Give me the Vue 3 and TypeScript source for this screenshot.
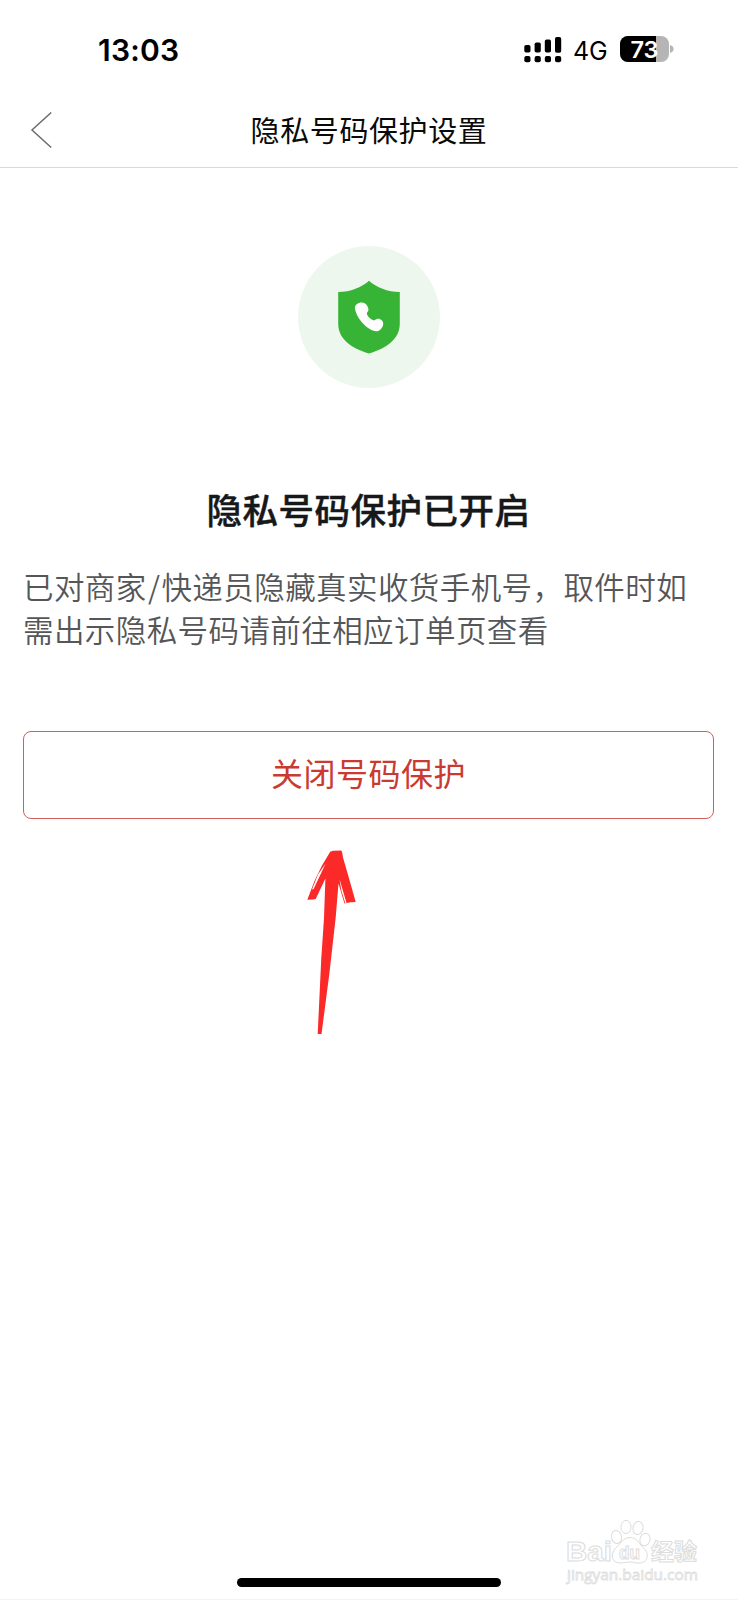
<script setup lang="ts">
interface SignalBar { x: number; y: number; h: number }

const bars: SignalBar[] = [
  { x: 0.3, y: 8, h: 7.6 },
  { x: 10.6, y: 5.5, h: 10 },
  { x: 20.8, y: 2.6, h: 13 },
  { x: 31, y: 0, h: 15.8 },
]
const batteryLevel = 73
const title = '隐私号码保护设置'
const heading = '隐私号码保护已开启'
const action = '关闭号码保护'
</script>

<template>
  <div class="screen">
    <header class="status">
      <span class="time">13:03</span>
      <div class="indicators">
        <svg class="signal" width="38" height="26" viewBox="0 0 38 26">
          <g v-for="bar in bars" :key="bar.x">
            <rect :x="bar.x" :y="bar.y" width="6.2" :height="bar.h" rx="1.8" />
            <rect :x="bar.x" y="19" width="6.2" height="6.2" rx="2" />
          </g>
        </svg>
        <span class="network">4G</span>
        <div class="battery">
          <div class="level" :style="{ width: batteryLevel + '%' }"></div>
          <span class="percent">{{ batteryLevel }}</span>
        </div>
        <svg class="nub" width="4" height="8" viewBox="0 0 4 8"><path d="M0 0Q3.6 1.2 3.6 4T0 8Z" fill="#b5b5b5" /></svg>
      </div>
    </header>

    <nav class="navbar">
      <svg class="back" width="24" height="40" viewBox="0 0 24 40">
        <path d="M21.2 2.5 2 20l19.2 17.5" fill="none" stroke="#6c6c6c" stroke-width="1.5" />
      </svg>
      <h1 class="title">{{ title }}</h1>
    </nav>

    <main class="content">
      <div class="badge">
        <svg width="64" height="74" viewBox="0 0 64 74">
          <path d="M32 .8C39.5 7.5 50.5 12 62.8 12v31.500C62.800 59 50 68 32 73.500 14 68 1.200 59 1.200 43.500V12C13.500 12 24.500 7.500 32 .8Z" fill="#37b435" />
          <path d="M18 28.500c-.8-4.700 6.200-7.600 10-5 1.900 1.300 4.300 5 3.200 7.500-.6 1.300-1.700 1.600-1.300 3 .7 2.600 3.700 5.300 6.400 6.300 1.400.4 2.100-.8 3.400-1.300 3-1.200 6.800 1.500 6.500 4.900-.3 3.800-3.500 7.400-7 7.300C31.500 51 19.500 39 18 28.500Z" fill="#fff" />
        </svg>
      </div>
      <h2 class="heading">{{ heading }}</h2>
      <p class="description">已对商家<span class="slash">/</span>快递员隐藏真实收货手机号，取件时如<br />需出示隐私号码请前往相应订单页查看</p>
      <button class="action" type="button">{{ action }}</button>
      <svg class="arrow" width="52" height="188" viewBox="0 0 52 188">
        <path d="M23.200 1.800 26 .8l8.200-.2.900 1.400.9 5.500 6.200 21.500L48.700 52l-5.200.300-6 1.200-6-20-2.800 34-6.200 55-8 61.500-3.800-.1L14.300 108 17 68 18.400 28.500 8.700 49 6 49.600l-5.700.2L7.500 31 15 15.500Z" fill="#fc2929" />
        <path d="M18.700 13.500 11 24.500 5 39.500l1.600-.4L13 25.500ZM32.500 29l7 24-1.200.2-4-13Z" fill="#fff" />
      </svg>
    </main>

    <footer class="footer">
      <div class="home"></div>
    </footer>

    <svg class="watermark" width="142" height="72" viewBox="0 0 142 72">
      <g fill="#fff" stroke="#dcdcdc" stroke-width="1">
        <text class="latin" x="1" y="42" font-size="27" textLength="46" lengthAdjust="spacingAndGlyphs">Bai</text>
        <ellipse cx="51.500" cy="18" rx="5" ry="6.600" transform="rotate(-12 51.500 18)" />
        <ellipse cx="61" cy="8" rx="5" ry="6.600" />
        <ellipse cx="73" cy="9" rx="5" ry="6.600" transform="rotate(10 73 9)" />
        <ellipse cx="80" cy="20.500" rx="5" ry="6.300" transform="rotate(18 80 20.500)" />
        <path d="M65 18.500c7 0 9 6 13 10 7 6 5 15-3 15.500-5 .3-6-1-10-1s-6 1.300-11 .9c-7.500-.6-9-9-3-15.400 5-4 7-10 14-10Z" />
        <text class="latin" x="54" y="40" font-size="19" textLength="21" lengthAdjust="spacingAndGlyphs">du</text>
        <text class="cjk" x="86" y="41" font-size="23" textLength="46" lengthAdjust="spacingAndGlyphs">经验</text>
      </g>
      <text class="site" x="2" y="61" textLength="131" lengthAdjust="spacingAndGlyphs">jingyan.baidu.com</text>
    </svg>
  </div>
</template>

<style>
body { margin: 0; background: #fff; }
</style>

<style scoped>
.screen {
  position: relative;
  box-sizing: border-box;
  width: 738px;
  height: 1600px;
  display: flex;
  flex-direction: column;
  overflow: hidden;
  background: #fff;
  border-bottom: 1px solid #f4f4f4;
  font-family: "Liberation Sans", "Noto Sans CJK SC", sans-serif;
}
.status {
  height: 100px;
  box-sizing: border-box;
  display: flex;
  justify-content: space-between;
  padding: 32px 64px 0 98px;
  font-family: Inter, sans-serif;
  color: #000;
}
.time { font-size: 30px; line-height: 37px; font-weight: 600; letter-spacing: 0.2px; }
.indicators { display: flex; align-items: flex-start; padding-top: 4px; }
.signal { margin-top: 1px; }
.network { width: 47px; box-sizing: border-box; padding-left: 11px; font-size: 25px; line-height: 31px; letter-spacing: -0.2px; }
.battery {
  position: relative;
  width: 49px;
  height: 26px;
  margin-left: 11px;
  border-radius: 8px;
  background: #b5b5b5;
}
.level { height: 100%; background: #000; border-radius: 8px 0 0 8px; }
.percent {
  position: absolute;
  inset: 0;
  color: #fff;
  font-size: 23.5px;
  line-height: 28px;
  font-weight: 600;
  text-align: center;
}
.nub { margin: 9px 0 0 1px; }
.navbar {
  height: 68px;
  box-sizing: border-box;
  display: grid;
  grid-template-columns: 100px 1fr 100px;
  border-bottom: 1px solid #d9d9d9;
}
.back { margin: 10px 0 0 30px; }
.title {
  margin: 8px 0 0;
  font-family: "Noto Sans CJK SC", sans-serif;
  font-size: 29px;
  line-height: 42px;
  letter-spacing: 0.6px;
  font-weight: 400;
  text-align: center;
  color: #0a0a0a;
}
.content { flex: 1; display: flex; flex-direction: column; align-items: center; padding: 0 24px 0 23px; }
.badge {
  width: 142px;
  height: 142px;
  margin-top: 78px;
  border-radius: 50%;
  background: #edf7ed;
  display: flex;
  align-items: center;
  justify-content: center;
}
.heading {
  margin: 95px 0 0;
  font-family: "Noto Sans CJK SC", sans-serif;
  font-size: 35.5px;
  line-height: 52px;
  letter-spacing: 0.5px;
  font-weight: 500;
  -webkit-text-stroke: 0.4px #17181a;
  color: #17181a;
}
.description {
  align-self: stretch;
  margin: 30px 0 0;
  font-family: "Noto Sans CJK SC", sans-serif;
  font-size: 30.5px;
  line-height: 43px;
  letter-spacing: 0.42px;
  font-weight: 350;
  white-space: nowrap;
  color: #555658;
}
.slash { margin: 0 1.2px; }
.action {
  align-self: stretch;
  height: 88px;
  margin-top: 80px;
  padding: 0 0 6px;
  border: 1px solid #d0605c;
  border-radius: 8px;
  background: #fff;
  font-family: "Noto Sans CJK SC", sans-serif;
  font-size: 32px;
  letter-spacing: 0.5px;
  color: #ca3a31;
}
.arrow { margin: 31px 71px 0 0; }
.footer { display: flex; justify-content: center; padding-bottom: 12px; }
.home { width: 264px; height: 9px; border-radius: 5px; background: #000; }
.watermark { position: absolute; left: 565px; top: 1519px; }
.latin { font-family: "Liberation Sans", sans-serif; font-weight: 700; }
.cjk { font-family: "Noto Sans CJK SC", sans-serif; font-weight: 700; }
.site { font-family: "Open Sans", sans-serif; font-size: 15px; fill: #fff; stroke: #dedede; stroke-width: 0.8px; }
</style>
